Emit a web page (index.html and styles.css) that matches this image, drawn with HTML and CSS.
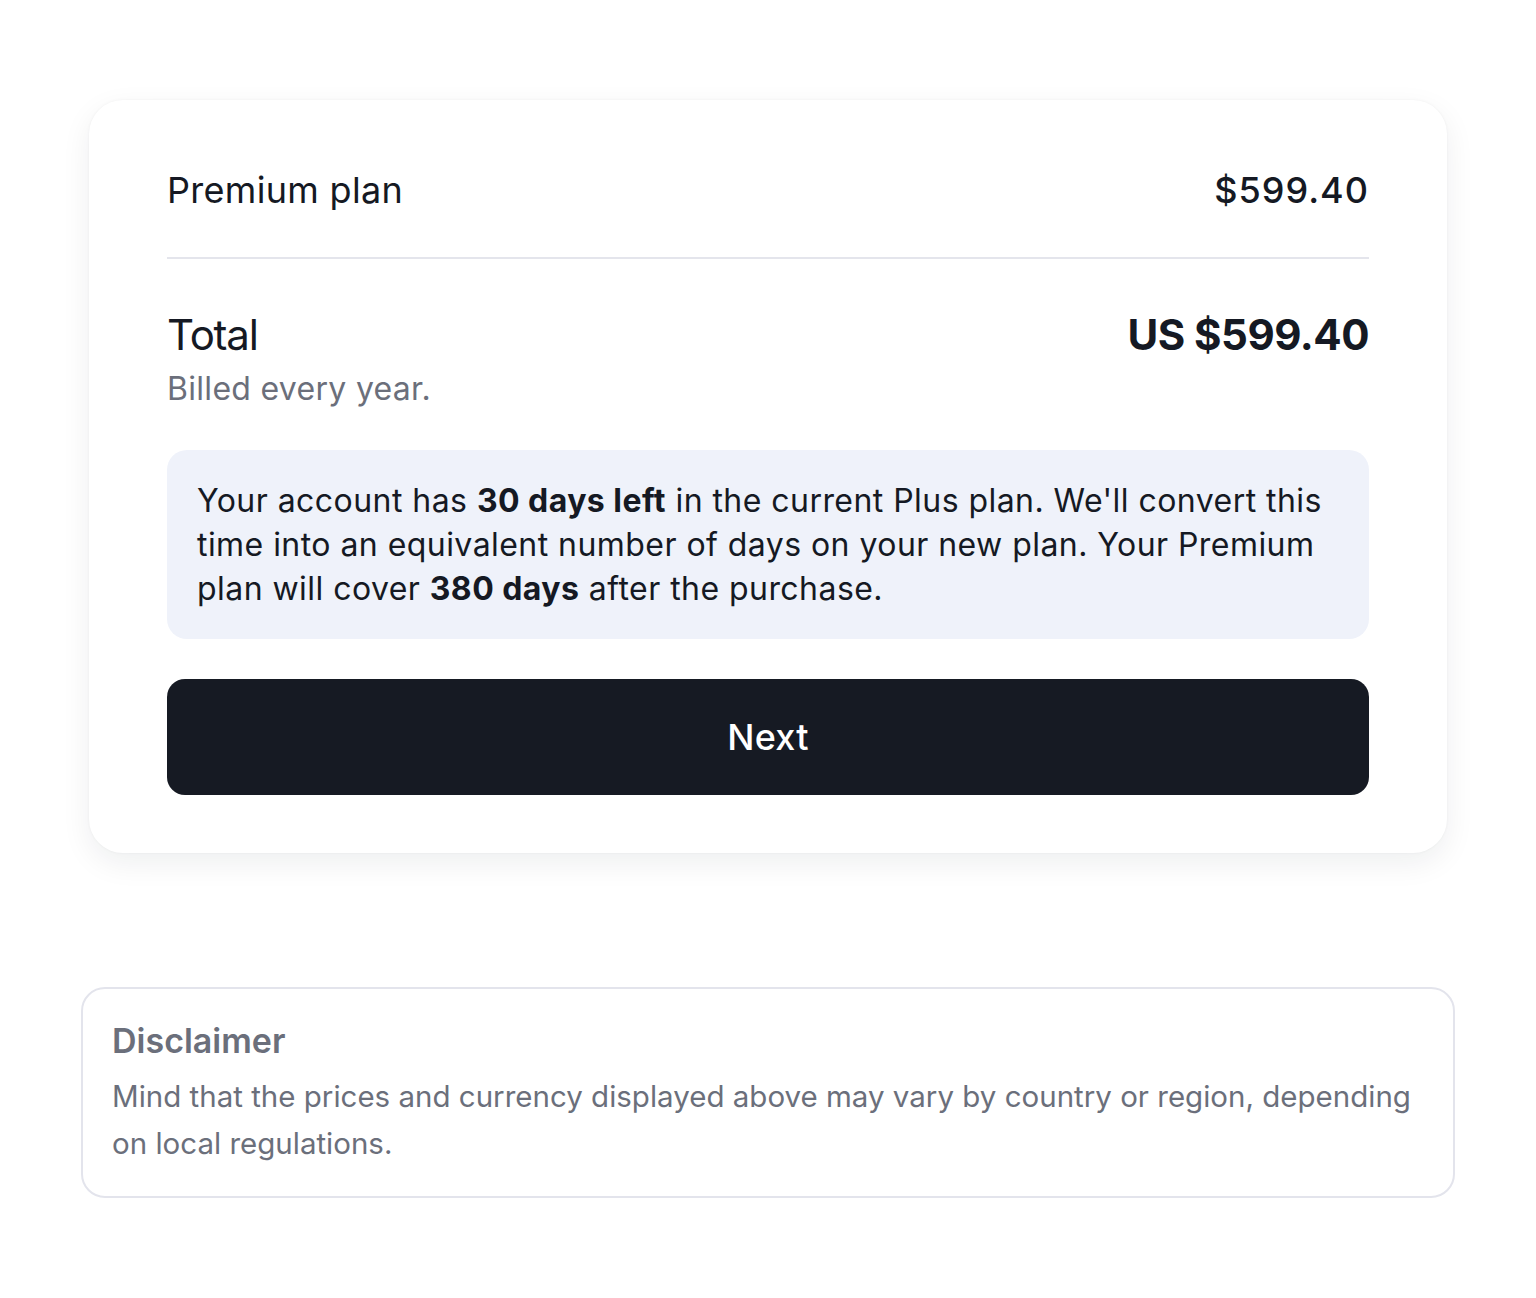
FILE: index.html
```html
<!DOCTYPE html>
<html lang="en">
<head>
<meta charset="utf-8">
<title>Checkout summary</title>
<link rel="stylesheet" href="styles.css">
</head>
<body>
<main class="page">
  <section class="card">
    <div class="row line-item">
      <span class="label">Premium plan</span>
      <span class="price">$599.40</span>
    </div>
    <hr class="divider">
    <div class="row total">
      <span class="total-label">Total</span>
      <span class="total-price">US $599.40</span>
    </div>
    <p class="billing">Billed every year.</p>
    <div class="notice">
      Your account has <strong>30 days left</strong> in the current Plus plan. We'll convert this time into an equivalent number of days on your new plan. Your Premium plan will cover <strong>380 days</strong> after the purchase.
    </div>
    <button class="next-btn" type="button">Next</button>
  </section>
  <section class="disclaimer">
    <h2 class="disclaimer-title">Disclaimer</h2>
    <p class="disclaimer-text">Mind that the prices and currency displayed above may vary by country or region, depending on local regulations.</p>
  </section>
</main>
</body>
</html>
```
FILE: styles.css
```css
* { box-sizing: border-box; }
html, body { margin: 0; padding: 0; background: #ffffff; }
body {
  font-family: "Inter", "Liberation Sans", sans-serif;
  color: #151923;
}
.page {
  width: 1374px;
  margin: 0 auto;
  padding-top: 100px;
  display: flex;
  flex-direction: column;
}
.card {
  margin: 0 8px;
  background: #fff;
  border-radius: 34px;
  box-shadow: 0 10px 30px rgba(20, 24, 40, 0.07), 0 0 3px rgba(20, 24, 40, 0.05);
  padding: 66px 78px 58px;
  display: flex;
  flex-direction: column;
}
.row {
  display: flex;
  justify-content: space-between;
  align-items: baseline;
}
.label, .price {
  font-size: 36px;
  line-height: 48px;
  font-weight: 400;
  letter-spacing: 0.3px;
}
.price { font-weight: 500; letter-spacing: 1px; }
.divider {
  border: 0;
  height: 2px;
  background: #e4e5ec;
  margin: 43px 0 0;
}
.total { margin-top: 50px; }
.total-label {
  font-size: 42px;
  line-height: 52px;
  font-weight: 400;
  letter-spacing: -1.2px;
}
.total-price {
  font-size: 42px;
  line-height: 52px;
  font-weight: 700;
  letter-spacing: -0.5px;
}
.billing {
  margin: 8px 0 0;
  font-size: 32px;
  line-height: 40px;
  letter-spacing: 0.3px;
  color: #6b6f7b;
}
.notice {
  margin-top: 41px;
  background: #eff2fa;
  border-radius: 20px;
  padding: 29px 30px 28px;
  font-size: 32px;
  line-height: 44px;
  letter-spacing: 0.45px;
  color: #151923;
}
.notice strong { font-weight: 650; }
.next-btn {
  margin-top: 40px;
  height: 116px;
  border: 0;
  border-radius: 18px;
  background: #161a23;
  color: #fff;
  font-family: inherit;
  font-size: 36px;
  font-weight: 500;
  letter-spacing: 0.3px;
}
.disclaimer {
  margin-top: 134px;
  border: 2px solid #e3e4ec;
  border-radius: 24px;
  padding: 30px 30px 29px 29px;
}
.disclaimer-title {
  margin: 0;
  font-size: 34px;
  line-height: 44px;
  font-weight: 600;
  color: #6b6f7b;
}
.disclaimer-text {
  margin: 10px 0 0;
  font-size: 29.5px;
  line-height: 47px;
  color: #6b6f7b;
}
```
